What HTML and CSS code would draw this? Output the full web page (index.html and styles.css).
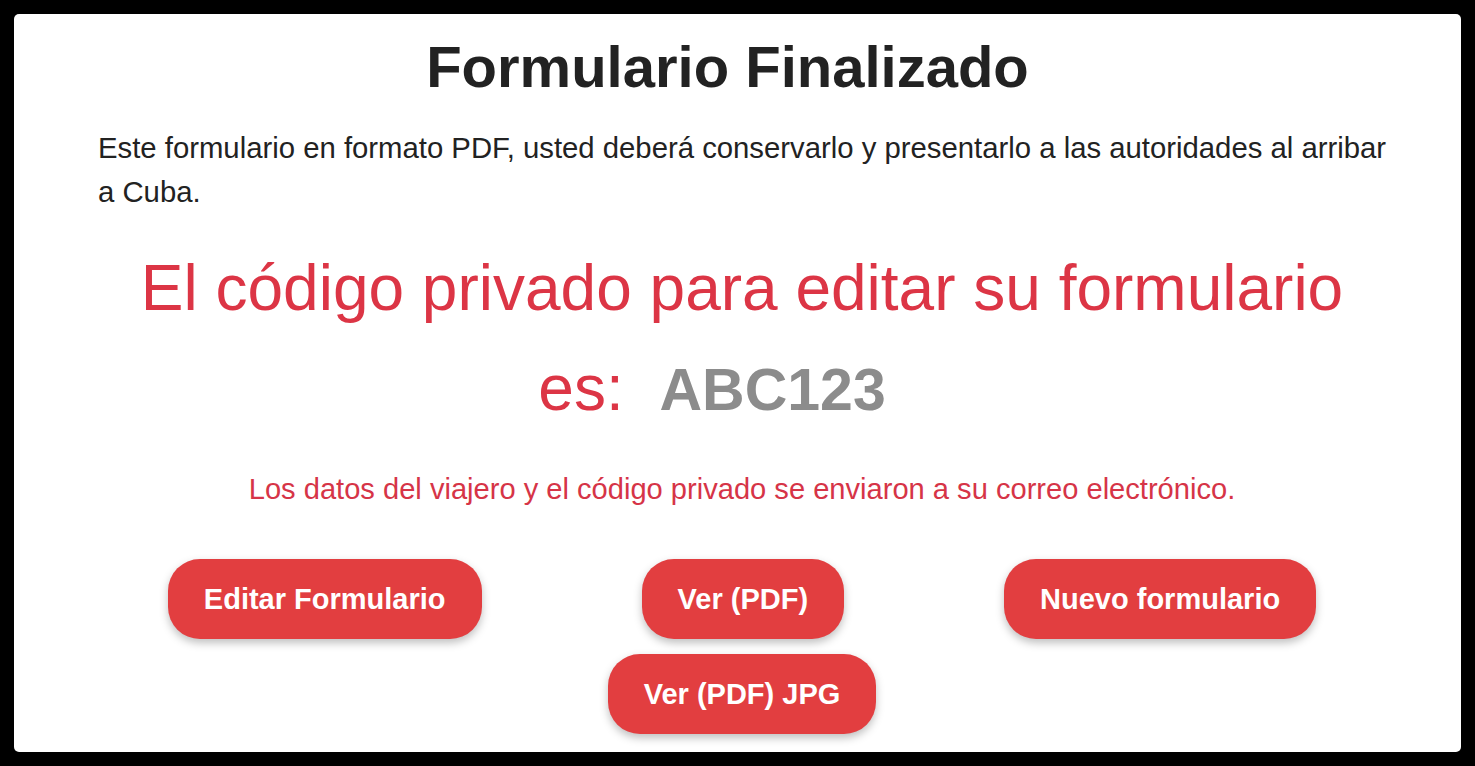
FILE: index.html
```html
<!DOCTYPE html>
<html lang="es">
<head>
<meta charset="utf-8">
<title>Formulario Finalizado</title>
<link rel="stylesheet" href="styles.css">
</head>
<body>
<main class="card">
  <h1 class="title">Formulario Finalizado</h1>
  <p class="intro">Este formulario en formato PDF, usted deberá conservarlo y presentarlo a las autoridades al arribar a Cuba.</p>
  <h2 class="code-line">El código privado para editar su formulario es: <span class="code">ABC123</span></h2>
  <p class="notice">Los datos del viajero y el código privado se enviaron a su correo electrónico.</p>
  <div class="actions">
    <a class="btn" href="#">Editar Formulario</a>
    <a class="btn" href="#">Ver (PDF)</a>
    <a class="btn" href="#">Nuevo formulario</a>
    <a class="btn" href="#">Ver (PDF) JPG</a>
  </div>
</main>
</body>
</html>
```
FILE: styles.css
```css
html, body {
  margin: 0;
  padding: 0;
  background: #000;
  height: 100%;
}

body {
  padding: 14px;
  box-sizing: border-box;
  font-family: "Liberation Sans", Arial, Helvetica, sans-serif;
  color: #222;
}

.card {
  background: #fff;
  border-radius: 5px;
  height: 100%;
  box-sizing: border-box;
  padding: 18px 75px 18px 84px;
  overflow: hidden;
}

.title {
  margin: 0;
  padding-right: 29px;
  font-size: 58px;
  line-height: 69px;
  font-weight: 700;
  text-align: center;
  color: #222;
}

.intro {
  margin: 25px -15px 0 0;
  font-size: 29.3px;
  line-height: 44px;
  color: #222;
}

.code-line {
  margin: 24px 0 0;
  font-size: 64px;
  line-height: 100px;
  font-weight: 400;
  text-align: center;
  color: #dc3545;
}

.code {
  margin-left: 18px;
  margin-right: 60px;
  font-size: 59px;
  font-weight: 700;
  color: #8c8c8c;
}

.notice {
  margin: 27px 0 0;
  font-size: 29.1px;
  line-height: 44px;
  text-align: center;
  color: #d63447;
}

.actions {
  margin: 48px auto 0;
  max-width: 1200px;
  display: flex;
  flex-wrap: wrap;
  justify-content: center;
  column-gap: 160px;
  row-gap: 15px;
}

.btn {
  display: flex;
  align-items: center;
  justify-content: center;
  height: 80px;
  padding: 0 36px;
  box-sizing: border-box;
  border-radius: 32px;
  background: #e23e40;
  color: #fff;
  font-size: 29px;
  font-weight: 700;
  text-decoration: none;
  box-shadow: 0 4px 8px rgba(0, 0, 0, 0.25);
}
```
